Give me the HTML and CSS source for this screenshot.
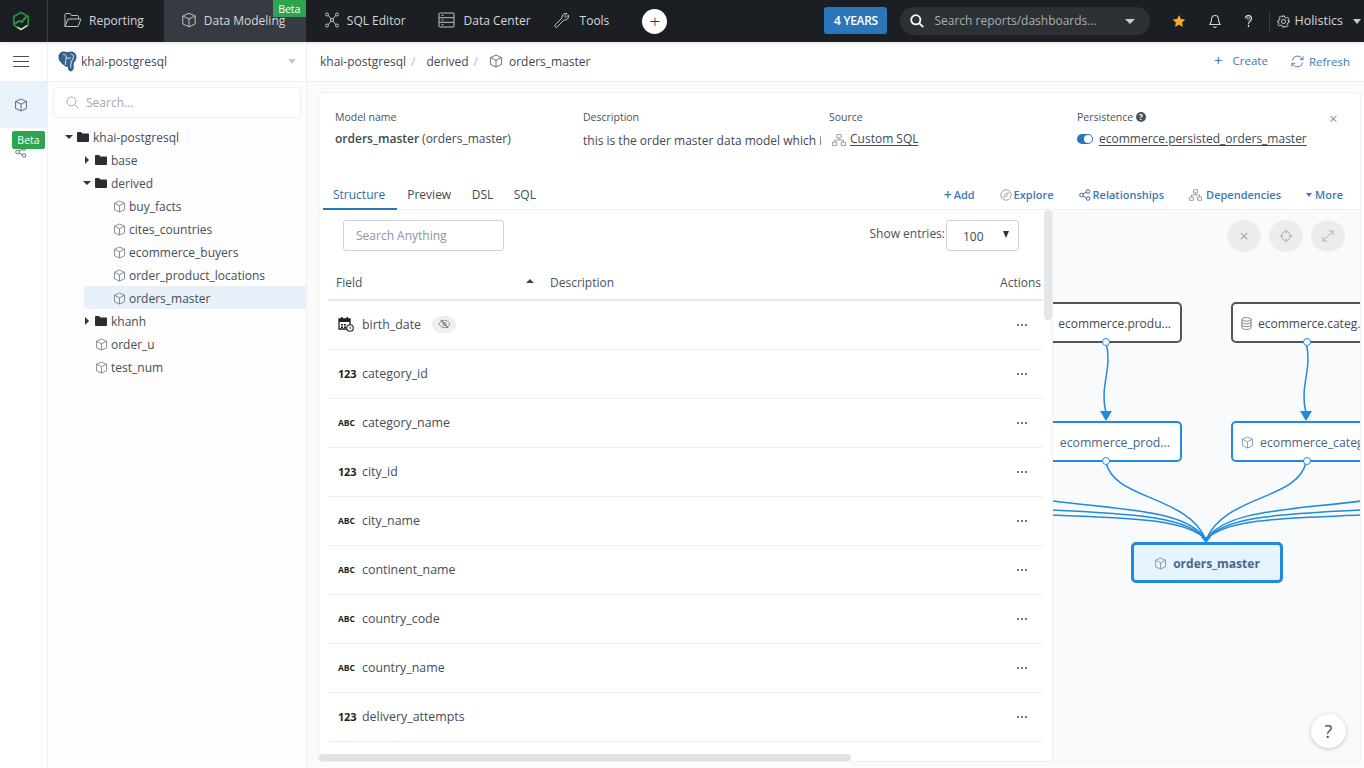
FILE: index.html
```html
<!DOCTYPE html>
<html lang="en">
<head>
<meta charset="utf-8">
<title>Data Modeling</title>
<link rel="stylesheet" href="styles.css">
</head>
<body>
<svg class="defs" width="0" height="0" aria-hidden="true">
  <symbol id="cube" viewBox="0 0 16 16"><path d="M8 1.200 14.200 4v8L8 14.800 1.800 12V4ZM1.800 4 8 7l6.200-3M8 7v7.800" fill="none" stroke="currentColor" stroke-width="1" stroke-linejoin="round"/></symbol>
  <symbol id="folder" viewBox="0 0 12 10"><path d="M0 1a1 1 0 0 1 1-1h3l1.500 1.500H11a1 1 0 0 1 1 1V9a1 1 0 0 1-1 1H1a1 1 0 0 1-1-1Z" fill="currentColor"/></symbol>
  <symbol id="tree" viewBox="0 0 16 14"><path d="M5.500.5h5v4h-5zM.5 9.500h5v4h-5zM10.500 9.500h5v4h-5zM8 4.500V7M3 9.500V7h10v2.500" fill="none" stroke="currentColor"/></symbol>
</svg>

<header class="topbar">
  <div class="logo-cell">
    <svg class="logo" viewBox="0 0 20 22"><path d="M10 1.500 18 6v9.500l-8 5-8-5V6Z" fill="none" stroke="#2c8c3c" stroke-width="2"/><path d="M3 14l5-3 3 1 5-6" fill="none" stroke="#2ea043" stroke-width="2"/><path d="M6 18l4 2.500 7-4.500" fill="none" stroke="#e8e8e8" stroke-width="1.500"/></svg>
  </div>
  <nav class="nav">
    <a class="nav-item nav-reporting"><svg class="nav-ic" viewBox="0 0 18 16"><path d="M1 14.500V2.500a1 1 0 0 1 1-1h4l1.500 2h6a1 1 0 0 1 1 1V7M1 14.500 4 7h13l-3 7.500Z" fill="none" stroke="currentColor" stroke-linejoin="round"/></svg>Reporting</a>
    <a class="nav-item nav-modeling"><svg class="nav-ic"><use href="#cube"/></svg>Data Modeling<span class="beta beta-nav">Beta</span></a>
    <a class="nav-item nav-sql"><svg class="nav-ic" viewBox="0 0 16 16"><path d="M3 2l10 12M13 2 3 14M8 6v4" fill="none" stroke="currentColor"/><circle cx="3" cy="2.500" r="1.500" fill="#1b1f24" stroke="currentColor"/><circle cx="13" cy="2.500" r="1.500" fill="#1b1f24" stroke="currentColor"/><circle cx="3" cy="13.500" r="1.500" fill="#1b1f24" stroke="currentColor"/><circle cx="13" cy="13.500" r="1.500" fill="#1b1f24" stroke="currentColor"/><circle cx="8" cy="8" r="1.500" fill="#1b1f24" stroke="currentColor"/></svg>SQL Editor</a>
    <a class="nav-item nav-center"><svg class="nav-ic" viewBox="0 0 17 16"><path d="M2 1h13a1 1 0 0 1 1 1v12a1 1 0 0 1-1 1H2a1 1 0 0 1-1-1V2a1 1 0 0 1 1-1ZM1 5.700h15M1 10.300h15M3.500 3.400h2M3.500 8h2M3.500 12.700h2" fill="none" stroke="currentColor"/></svg>Data Center</a>
    <a class="nav-item nav-tools"><svg class="nav-ic" viewBox="0 0 16 16"><path d="M1.200 12.800 8 6a4 4 0 0 1 5-4.500L10.500 4l1.500 1.500L14.500 3A4 4 0 0 1 10 8l-6.800 6.800a1.300 1.300 0 0 1-2-2Z" fill="none" stroke="currentColor" stroke-linejoin="round"/></svg>Tools</a>
    <button class="plus">+</button>
  </nav>
  <div class="top-right">
    <button class="years">4 YEARS</button>
    <div class="global-search">
      <svg class="gs-ic" viewBox="0 0 14 14"><circle cx="5.800" cy="5.800" r="4.600" fill="none" stroke="#fff" stroke-width="1.800"/><path d="m9.200 9.200 4 4" stroke="#fff" stroke-width="1.800"/></svg>
      <span class="gs-text">Search reports/dashboards...</span>
      <span class="caret caret-light"></span>
    </div>
    <svg class="star" viewBox="0 0 16 16"><path d="m8 1 2.200 4.600 5 .7-3.600 3.500.9 5L8 12.400l-4.500 2.400.9-5L.8 6.300l5-.7Z" fill="#f9a825"/></svg>
    <svg class="bell" viewBox="0 0 14 16"><path d="M7 1.500a4 4 0 0 1 4 4c0 4 1.500 5.500 2 6.500H1c.5-1 2-2.500 2-6.500a4 4 0 0 1 4-4ZM5.500 14a1.500 1.500 0 0 0 3 0" fill="none" stroke="#d5d7da" stroke-width="1.200"/></svg>
    <svg class="qmark" viewBox="0 0 10 16"><path d="M1.500 5a3.500 3.500 0 1 1 5.500 3c-1.300.8-2 1.300-2 3M5 12.300v2.500" fill="none" stroke="#d5d7da" stroke-width="1.500"/><circle cx="5" cy="5" r="1.300" fill="none" stroke="#d5d7da"/></svg>
    <span class="divider"></span>
    <svg class="gear" viewBox="0 0 14 14"><circle cx="7" cy="7" r="2.200" fill="none" stroke="#d5d7da"/><path d="M6 1h2l.4 1.700 1.500.7 1.500-.9 1.400 1.400-.9 1.500.6 1.500L13 6v2l-1.500.5-.6 1.500.9 1.500-1.400 1.400-1.500-.9-1.500.6L8 13H6l-.4-1.500-1.500-.6-1.500.9-1.400-1.400.9-1.500-.6-1.500L1 8V6l1.500-.4.6-1.500-.9-1.500 1.400-1.400 1.500.9 1.500-.7Z" fill="none" stroke="#d5d7da"/></svg>
    <span class="user">Holistics</span>
    <span class="caret caret-light"></span>
  </div>
</header>

<div class="shell">
  <aside class="rail">
    <div class="rail-top"><span class="burger"></span></div>
    <div class="rail-cube"><svg class="ic16"><use href="#cube"/></svg></div>
    <div class="rail-rel">
      <span class="beta beta-rail">Beta</span>
      <svg class="rel-ic" viewBox="0 0 12 12"><circle cx="2.500" cy="6" r="1.800" fill="none" stroke="currentColor"/><circle cx="9" cy="2.500" r="1.800" fill="none" stroke="currentColor"/><circle cx="9" cy="9.500" r="1.800" fill="none" stroke="currentColor"/><path d="m4 5 3.500-2M4 7l3.500 2" stroke="currentColor"/></svg>
    </div>
  </aside>

  <aside class="browser">
    <div class="ds-head">
      <svg class="pg" viewBox="0 0 20 22"><path d="M1 6C1 2 4 .5 7 1c1.200.2 2 .7 3 .7s2-.6 3.400-.7C16.500.8 19 2.500 19 6c0 3-1.500 5-3 6.500V18c0 2.500-2.500 3.500-4 2.500-.9-.6-1-2.500-1-4.500-2 .4-3.500 0-4.500-1.500C4 13.500 1 10 1 6Z" fill="#336791" stroke="#1d3f5e" stroke-width=".8"/><path d="M5.500 3.500C8 3 9 6 8.500 8.500S7.500 12 8 14.500M13.500 3C16 3.500 17 6 15.500 8.500 14 11 13 13 13.500 17.500M9 7c1.500.8 3 .8 4.500 0" fill="none" stroke="#fff" stroke-width=".9"/></svg>
      <span class="ds-name">khai-postgresql</span>
      <span class="caret caret-grey"></span>
    </div>
    <div class="tree-search">
      <svg class="ts-ic" viewBox="0 0 14 14"><circle cx="5.800" cy="5.800" r="4.800" fill="none" stroke="#9aa3ad"/><path d="m9.300 9.300 4 4" stroke="#9aa3ad"/></svg>
      <span class="ts-text">Search...</span>
    </div>
    <ul class="tree">
      <li class="t-row d0"><span class="arrow down"></span><svg class="folder"><use href="#folder"/></svg>khai-postgresql</li>
      <li class="t-row d1"><span class="arrow right"></span><svg class="folder"><use href="#folder"/></svg>base</li>
      <li class="t-row d1"><span class="arrow down"></span><svg class="folder"><use href="#folder"/></svg>derived</li>
      <li class="t-row d2"><svg class="t-cube"><use href="#cube"/></svg>buy_facts</li>
      <li class="t-row d2"><svg class="t-cube"><use href="#cube"/></svg>cites_countries</li>
      <li class="t-row d2"><svg class="t-cube"><use href="#cube"/></svg>ecommerce_buyers</li>
      <li class="t-row d2"><svg class="t-cube"><use href="#cube"/></svg>order_product_locations</li>
      <li class="t-row d2 selected"><svg class="t-cube"><use href="#cube"/></svg>orders_master</li>
      <li class="t-row d1"><span class="arrow right"></span><svg class="folder"><use href="#folder"/></svg>khanh</li>
      <li class="t-row d3"><svg class="t-cube"><use href="#cube"/></svg>order_u</li>
      <li class="t-row d3"><svg class="t-cube"><use href="#cube"/></svg>test_num</li>
    </ul>
  </aside>

  <main class="main">
    <div class="crumbs">
      <span>khai-postgresql</span><span class="sep">/</span>
      <span>derived</span><span class="sep">/</span>
      <svg class="crumb-cube"><use href="#cube"/></svg>
      <span>orders_master</span>
      <div class="crumb-actions">
        <a class="link link-create"><span class="plus-sign">+</span>Create</a>
        <a class="link"><svg class="refresh" viewBox="0 0 14 14"><path d="M1.500 6A5.500 5.500 0 0 1 11.500 3.500L13 5M12.500 8A5.500 5.500 0 0 1 2.500 10.500L1 9M13 1.500V5H9.500M1 12.500V9h3.500" fill="none" stroke="currentColor"/></svg>Refresh</a>
      </div>
    </div>

    <section class="card">
      <div class="info">
        <div class="info-col"><div class="lbl">Model name</div><div class="val"><b>orders_master</b> (orders_master)</div></div>
        <div class="info-col"><div class="lbl">Description</div><div class="val desc">this is the order master data model which i</div></div>
        <div class="info-col"><div class="lbl">Source</div><div class="val"><svg class="src-ic"><use href="#tree"/></svg><u>Custom SQL</u></div></div>
        <div class="info-col"><div class="lbl">Persistence <span class="help-dot">?</span></div><div class="val"><span class="toggle"></span><u>ecommerce.persisted_orders_master</u></div><span class="close">×</span></div>
      </div>

      <div class="tabs">
        <span class="tab active">Structure</span>
        <span class="tab">Preview</span>
        <span class="tab">DSL</span>
        <span class="tab">SQL</span>
        <div class="tab-actions">
          <a class="act"><b class="act-plus">+</b>Add</a>
          <a class="act"><svg class="act-ic" viewBox="0 0 12 12"><circle cx="6" cy="6" r="5.200" fill="none" stroke="#9aa3ad"/><path d="M8.500 3.500 7 7 3.500 8.500 5 5Z" fill="none" stroke="#9aa3ad" stroke-width=".8"/></svg>Explore</a>
          <a class="act"><svg class="act-ic" viewBox="0 0 12 12"><circle cx="2.500" cy="6" r="1.800" fill="none" stroke="#4a6a8a"/><circle cx="9" cy="2.500" r="1.800" fill="none" stroke="#4a6a8a"/><circle cx="9" cy="9.500" r="1.800" fill="none" stroke="#4a6a8a"/><path d="m4 5 3.500-2M4 7l3.500 2" stroke="#4a6a8a"/></svg>Relationships</a>
          <a class="act"><svg class="act-ic act-tree"><use href="#tree"/></svg>Dependencies</a>
          <a class="act"><span class="more-caret"></span>More</a>
        </div>
      </div>

      <div class="split">
        <div class="fields">
          <div class="tools">
            <div class="search-any">Search Anything</div>
            <div class="entries"><span>Show entries:</span><div class="select"><span>100</span><span class="sel-caret"></span></div></div>
          </div>
          <div class="thead">
            <div class="th-field">Field<span class="sort"></span></div>
            <div class="th-desc">Description</div>
            <div class="th-act">Actions</div>
          </div>
          <div class="row"><svg class="cal" viewBox="0 0 16 16"><path d="M1 3h11v10H1z" fill="none" stroke="#222" stroke-width="1.300"/><path d="M1 3h11v3H1zM3 1h1.500v3H3zM8.500 1H10v3H8.500zM3 8h2v1.500H3zM6 8h2v1.500H6zM3 10.500h2V12H3zM6 10.500h2V12H6z" fill="#222"/><circle cx="12" cy="12" r="3.300" fill="#fff" stroke="#222" stroke-width="1.100"/><path d="M12 10.300V12l1.200.8" fill="none" stroke="#222" stroke-width=".8"/></svg><span class="fname">birth_date</span><span class="hidden-chip"><svg viewBox="0 0 14 10"><path d="M1 5c3-5.300 9-5.300 12 0-3 5.300-9 5.300-12 0Z" fill="none" stroke="#888"/><circle cx="7" cy="5" r="1.800" fill="none" stroke="#888"/><path d="m3 .5 8 9" stroke="#777" stroke-width="1.200"/></svg></span><span class="dots"></span></div>
          <div class="row"><span class="ty num">123</span><span class="fname">category_id</span><span class="dots"></span></div>
          <div class="row"><span class="ty abc">ABC</span><span class="fname">category_name</span><span class="dots"></span></div>
          <div class="row"><span class="ty num">123</span><span class="fname">city_id</span><span class="dots"></span></div>
          <div class="row"><span class="ty abc">ABC</span><span class="fname">city_name</span><span class="dots"></span></div>
          <div class="row"><span class="ty abc">ABC</span><span class="fname">continent_name</span><span class="dots"></span></div>
          <div class="row"><span class="ty abc">ABC</span><span class="fname">country_code</span><span class="dots"></span></div>
          <div class="row"><span class="ty abc">ABC</span><span class="fname">country_name</span><span class="dots"></span></div>
          <div class="row"><span class="ty num">123</span><span class="fname">delivery_attempts</span><span class="dots"></span></div>
          <div class="row"></div>
          <span class="vscroll"></span>
        </div>

        <div class="canvas">
          <div class="canvas-btns">
            <span class="cbtn">×</span>
            <span class="cbtn"><svg viewBox="0 0 14 14"><circle cx="7" cy="7" r="4.500" fill="none" stroke="#aab0b6"/><path d="M7 .5v4M7 9.500v4M.5 7h4M9.500 7h4" stroke="#aab0b6"/></svg></span>
            <span class="cbtn"><svg viewBox="0 0 14 14"><path d="M2 12 12 2M8 2h4v4M2 8v4h4" fill="none" stroke="#aab0b6"/></svg></span>
          </div>
          <svg class="edges" viewBox="0 0 308 552">
            <g fill="none" stroke="#2089e0" stroke-width="1.500">
              <path d="M53 132C60 160 46 175 53 203"/>
              <path d="M253 132C260 160 246 175 253 203"/>
              <path d="M53 252C60 290 135 285 153 330"/>
              <path d="M253 252C246 290 171 285 153 330"/>
              <path d="M0 291C70 300 135 300 153 330"/>
              <path d="M0 300C70 304 135 305 153 330"/>
              <path d="M0 305C70 308 135 308 153 330"/>
              <path d="M308 291C238 300 171 300 153 330"/>
              <path d="M308 300C238 304 171 305 153 330"/>
              <path d="M308 305C238 308 171 308 153 330"/>
            </g>
            <path d="M47 201H59L53 211ZM247 201H259L253 211ZM148 327H158L153 333Z" fill="#2089e0"/>
          </svg>
          <div class="node node-src n1"><span class="node-text">ecommerce.produ...</span><i class="port"></i></div>
          <div class="node node-src n2"><svg class="db" viewBox="0 0 12 14"><ellipse cx="6" cy="2.500" rx="5" ry="2" fill="none" stroke="#777"/><path d="M1 2.500v9c0 1.100 2.200 2 5 2s5-.9 5-2v-9M1 5.500c0 1.100 2.200 2 5 2s5-.9 5-2M1 8.500c0 1.100 2.200 2 5 2s5-.9 5-2" fill="none" stroke="#777"/></svg><span class="node-text">ecommerce.categ...</span><i class="port"></i></div>
          <div class="node node-model n3"><svg class="node-cube"><use href="#cube"/></svg><span class="node-text">ecommerce_prod...</span><i class="port"></i></div>
          <div class="node node-model n4"><svg class="node-cube"><use href="#cube"/></svg><span class="node-text">ecommerce_categ...</span><i class="port"></i></div>
          <div class="node node-main"><svg class="node-cube"><use href="#cube"/></svg><span class="node-text">orders_master</span></div>
          <button class="help">?</button>
        </div>
      </div>
      <span class="hscroll"></span>
    </section>
  </main>
</div>
</body>
</html>
```

FILE: styles.css
```css
* { box-sizing: border-box; }
html, body { margin: 0; height: 100%; overflow: hidden; }
body { font-family: "Open Sans", "Liberation Sans", sans-serif; font-size: 12px; color: #3f4853; background: #fff; width: 1364px; height: 768px; }
.defs { position: absolute; }
button { font-family: inherit; border: 0; padding: 0; }
u { text-underline-offset: 2px; }
ul { list-style: none; margin: 0; padding: 0; }

/* top bar */
.topbar { height: 42px; background: #1b1f24; color: #d5d7da; display: flex; align-items: stretch; box-shadow: 0 1px 3px rgba(0,0,0,.12); position: relative; z-index: 2; }
.logo-cell { width: 48px; display: flex; align-items: center; justify-content: center; border-right: 1px solid #3a3e44; padding-right: 5px; }
.logo { width: 18px; height: 20px; }
.nav { display: flex; align-items: stretch; }
.nav-item { display: flex; align-items: center; font-size: 12px; position: relative; white-space: nowrap; padding-bottom: 2px; }
.nav-ic { width: 16px; height: 16px; color: #bfc2c6; flex: none; }
.nav-reporting { padding-left: 16px; padding-right: 20px; }
.nav-reporting .nav-ic { width: 18px; margin-right: 7px; }
.nav-modeling { background: #363b41; padding-left: 17px; width: 142px; }
.nav-modeling .nav-ic { margin-right: 7px; }
.nav-sql { padding-left: 18px; padding-right: 32px; }
.nav-sql .nav-ic { margin-right: 7px; }
.nav-center { padding-right: 23px; }
.nav-center .nav-ic { width: 17px; margin-right: 9px; }
.nav-tools { padding-right: 33px; }
.nav-tools .nav-ic { margin-right: 10px; }
.plus { width: 25px; height: 25px; border-radius: 50%; background: #fff; color: #333; font-size: 19px; line-height: 23px; align-self: center; font-weight: 300; }
.beta { background: #2ea44f; color: #fff; font-size: 10.500px; display: flex; align-items: center; justify-content: center; position: absolute; }
.beta-nav { width: 33px; height: 17px; top: 0; right: 0; }
.beta-rail { width: 33px; height: 18px; top: 3px; left: 12px; border-radius: 2px; z-index: 1; }
.top-right { margin-left: auto; display: flex; align-items: center; padding-right: 3px; }
.years { width: 63px; height: 27px; background: #2b76b8; color: #fff; font-size: 12px; font-weight: 600; border-radius: 3px; margin: 0 13px 1px 0; letter-spacing: -.3px; padding-bottom: 1px; }
.global-search { width: 250px; height: 28px; border-radius: 14px; background: #2d3136; display: flex; align-items: center; padding: 0 15px 0 10px; margin-right: 22px; }
.gs-ic { width: 14px; height: 14px; margin-right: 10px; }
.gs-text { flex: 1; font-size: 12px; color: #a9adb2; padding-bottom: 2px; }
.caret { width: 0; height: 0; border-left: 5px solid transparent; border-right: 5px solid transparent; border-top: 5px solid #c9ccd0; }
.star { width: 14px; height: 14px; margin-right: 23px; }
.bell { width: 12px; height: 14px; margin-right: 23px; }
.qmark { width: 9px; height: 14px; margin-right: 16px; }
.divider { width: 1px; height: 21px; background: #3a3e44; margin-right: 7px; }
.gear { width: 13px; height: 13px; margin-right: 4px; }
.user { font-size: 12.500px; margin-right: 10px; padding-bottom: 2px; }
.top-right > .caret { border-left-width: 4px; border-right-width: 4px; }

/* shell */
.shell { display: flex; height: 726px; }
.rail { width: 48px; flex: none; border-right: 1px solid #edeff1; }
.rail-top { height: 40px; display: flex; align-items: center; justify-content: center; border-bottom: 1px solid #edeff1; padding-right: 5px; }
.burger { width: 16px; height: 11px; border-top: 1px solid #4a4f55; border-bottom: 1px solid #4a4f55; position: relative; }
.burger::after { content: ""; position: absolute; left: 0; right: 0; top: 4px; height: 1px; background: #4a4f55; }
.rail-cube { height: 46px; background: #e9f2fb; display: flex; align-items: center; justify-content: center; color: #4d5a68; padding-right: 5px; }
.ic16 { width: 14px; height: 14px; }
.rail-rel { position: relative; height: 40px; color: #6b7280; }
.rel-ic { width: 12px; height: 12px; position: absolute; left: 15px; top: 18px; }

/* tree */
.browser { width: 259px; flex: none; border-right: 1px solid #edeff1; background: #fdfdfd; }
.ds-head { height: 40px; background: #fff; border-bottom: 1px solid #edeff1; display: flex; align-items: center; padding: 0 10px 1px 10px; font-size: 12px; }
.pg { width: 19px; height: 21px; margin-right: 4px; }
.ds-name { flex: 1; color: #3f4853; }
.caret-grey { border-left-width: 4.500px; border-right-width: 4.500px; border-top-width: 5px; border-top-color: #c5c8cc; }
.tree-search { height: 31px; margin: 5px 5px 7px 5px; border: 1px solid #eceef0; border-radius: 4px; background: #fff; display: flex; align-items: center; padding-left: 12px; }
.ts-ic { width: 13px; height: 13px; margin-right: 7px; }
.ts-text { color: #a3a9b0; font-size: 12px; }
.tree { font-size: 12px; color: #454d57; }
.t-row { height: 23px; display: flex; align-items: center; padding-top: 1px; }
.d0 { padding-left: 18px; }
.d1 { padding-left: 36px; }
.d2 { padding-left: 65px; }
.d3 { padding-left: 47px; }
.selected { background: #e8f1f9; margin-left: 36px; padding-left: 29px; }
.arrow { width: 0; height: 0; margin-right: 5px; }
.arrow.down { border-left: 4px solid transparent; border-right: 4px solid transparent; border-top: 4px solid #333; margin-right: 4px; margin-left: -1px; }
.arrow.right { border-top: 4px solid transparent; border-bottom: 4px solid transparent; border-left: 4px solid #333; margin-right: 6px; margin-left: 1px; }
.folder { width: 12px; height: 10px; color: #2a2d31; margin-right: 4px; }
.t-cube { width: 13px; height: 13px; color: #6d7681; margin-right: 3px; }

/* main */
.main { flex: 1; background: #fbfbfb; display: flex; flex-direction: column; min-width: 0; }
.crumbs { height: 40px; background: #fff; border-bottom: 1px solid #edeff1; display: flex; align-items: center; padding: 0 14px 1px 13px; font-size: 12px; color: #3f4853; flex: none; }
.sep { color: #b8bcc1; margin: 0 11px 0 5px; }
.crumb-cube { width: 14px; height: 14px; color: #5a636e; margin: 0 6px 0 0; }
.crumb-actions { margin-left: auto; display: flex; gap: 23px; }
.link { color: #3d78b4; font-size: 11.500px; display: flex; align-items: center; }
.link-create { padding-bottom: 2px; }
.plus-sign { font-size: 15px; margin-right: 10px; line-height: 14px; }
.refresh { width: 13px; height: 13px; margin-right: 5px; }

.card { margin: 10px 3px 6px 11px; height: 670px; background: #fff; border: 1px solid #eef0f2; border-radius: 3px; position: relative; overflow: hidden; display: flex; flex-direction: column; }
.info { display: grid; grid-template-columns: 248px 246px 248px 1fr; padding: 17px 0 0 16px; height: 83px; flex: none; }
.info-col { position: relative; min-width: 0; }
.lbl { font-size: 10.500px; color: #4a525c; line-height: 14px; margin-bottom: 6px; }
.val { font-size: 12px; line-height: 18px; white-space: nowrap; overflow: hidden; display: flex; align-items: center; color: #3f4853; width: 238px; }
.val b { font-weight: 600; margin-right: 3px; }
.desc { margin-top: 8px; }
.info-col:last-child .val { overflow: visible; }
.src-ic { width: 14px; height: 12px; color: #8a8f96; margin: 2px 4px 0 3px; }
.toggle { width: 16px; height: 10px; border-radius: 5px; background: #2b76b8; margin-right: 6px; position: relative; flex: none; }
.toggle::after { content: ""; position: absolute; right: 1px; top: 1px; width: 8px; height: 8px; border-radius: 50%; background: #fff; }
.help-dot { display: inline-block; width: 10px; height: 10px; border-radius: 50%; background: #4a525c; color: #fff; font-size: 8px; line-height: 10px; text-align: center; font-weight: 700; vertical-align: 1px; }
.close { position: absolute; top: -2px; left: 252px; font-size: 15px; color: #8d949b; line-height: 20px; }

.tabs { height: 34px; flex: none; display: flex; align-items: center; border-bottom: 1px solid #edeff1; padding: 6px 17px 0 4px; font-size: 12px; color: #434b55; }
.tab { padding: 0 10.250px; height: 28px; line-height: 26px; margin-bottom: -1px; }
.tab.active { color: #2b6da8; border-bottom: 2px solid #2b76b8; width: 74px; padding: 0 10px; }
.tab-actions { margin-left: auto; display: flex; align-items: center; gap: 25px; font-size: 11px; color: #3d78b4; font-weight: 600; padding-bottom: 2px; }
.tab-actions .act { display: flex; align-items: center; }
.act-plus { font-size: 14px; line-height: 12px; margin-right: 2px; font-weight: 600; }
.act-ic { width: 12px; height: 12px; margin-right: 2px; }
.act-tree { width: 13px; color: #8a8f96; margin-right: 4px; }
.more-caret { width: 0; height: 0; border-left: 3.500px solid transparent; border-right: 3.500px solid transparent; border-top: 4px solid #3d78b4; margin-right: 3px; }

.split { flex: 1; display: flex; min-height: 0; }
.fields { width: 734px; flex: none; position: relative; overflow: hidden; padding-left: 9px; padding-right: 9px; border-right: 1px solid #eef0f2; }
.tools { height: 41px; padding: 10px 0 0 15px; display: flex; justify-content: space-between; }
.search-any { width: 161px; height: 31px; border: 1px solid #cfd3d7; border-radius: 3px; color: #8e959d; font-size: 12px; line-height: 30px; padding-left: 12px; }
.entries { display: flex; font-size: 12px; margin-right: 24px; }
.entries > span { line-height: 27px; color: #4a525c; }
.select { width: 73px; height: 31px; margin-left: 1px; border: 1px solid #cfd3d7; border-radius: 3px; display: flex; justify-content: space-between; align-items: center; padding: 1px 9px 0 16px; }
.sel-caret { width: 0; height: 0; border-left: 3.500px solid transparent; border-right: 3.500px solid transparent; border-top: 7px solid #333; margin-top: -3px; }
.thead { height: 50px; border-bottom: 2px solid #e6e7e9; position: relative; font-size: 12px; color: #4a525c; }
.thead > div { position: absolute; top: 24px; line-height: 16px; }
.th-field { left: 8px; width: 200px; }
.sort { position: absolute; left: 190px; top: 4px; width: 0; height: 0; border-left: 4px solid transparent; border-right: 4px solid transparent; border-bottom: 4px solid #444; }
.th-desc { left: 222px; }
.th-act { right: 2px; }
.row { height: 49px; border-bottom: 1px solid #eeeff2; display: flex; align-items: center; padding: 0 0 2px 10px; position: relative; }
.ty { width: 24px; color: #1c1f22; font-weight: 700; flex: none; }
.num { font-size: 11px; letter-spacing: -.2px; }
.abc { font-size: 8.500px; }
.cal { width: 16px; height: 16px; margin-right: 8px; flex: none; }
.fname { font-size: 12.400px; color: #454d57; font-weight: 500; }
.hidden-chip { width: 24px; height: 17px; background: #efefef; border-radius: 9px; margin-left: 11px; display: flex; align-items: center; justify-content: center; }
.hidden-chip svg { width: 13px; height: 10px; }
.dots { position: absolute; right: 16px; top: 23px; width: 10px; height: 2px; background: linear-gradient(90deg, #777 0 2px, transparent 2px 4px, #777 4px 6px, transparent 6px 8px, #777 8px 10px); }
.vscroll { position: absolute; right: 0; top: 0; width: 8px; height: 110px; border-radius: 4px; background: #e5e6e8; }
.hscroll { position: absolute; left: 0; bottom: 0; width: 532px; height: 7px; border-radius: 4px; background: #e0e1e3; z-index: 1; }

.canvas { flex: 1; position: relative; overflow: hidden; background: #f9fafb; }
.canvas-btns { position: absolute; right: 15px; top: 10px; display: flex; gap: 8px; }
.cbtn { width: 34px; height: 32px; border-radius: 50%; background: #ececec; display: flex; align-items: center; justify-content: center; color: #a4a9ae; font-size: 16px; }
.cbtn svg { width: 14px; height: 14px; }
.edges { position: absolute; left: 0; top: 0; width: 308px; height: 552px; }
.node { position: absolute; height: 41px; background: #fff; border-radius: 5px; display: flex; align-items: center; white-space: nowrap; font-size: 12px; padding-top: 1px; }
.node-src { border: 2px solid #555; color: #3f4853; }
.node-model { border: 2px solid #2089e0; color: #4b6485; font-size: 12.300px; }
.port { position: absolute; bottom: -5px; width: 8px; height: 8px; border-radius: 50%; background: #fff; border: 1.500px solid #2089e0; }
.n1 { left: -30px; width: 159px; top: 92px; justify-content: flex-end; padding-right: 9px; }
.n1 .port, .n3 .port { left: 77px; }
.n2 { left: 178px; width: 200px; top: 92px; padding-left: 8px; }
.n2 .port, .n4 .port { left: 70px; }
.n3 { left: -30px; width: 159px; top: 211px; justify-content: flex-end; padding-right: 10px; }
.n4 { left: 178px; width: 200px; top: 211px; padding-left: 8px; }
.db { width: 11px; height: 13px; margin-right: 6px; flex: none; }
.node-cube { width: 13px; height: 13px; color: #6c8cad; margin-right: 6px; flex: none; }
.node-main { left: 78px; top: 332px; width: 152px; height: 41px; background: #e6f3fd; border: 3px solid #2089e0; border-radius: 5px; justify-content: center; font-weight: 700; font-size: 12px; color: #45688e; }
.help { position: absolute; left: 258px; top: 504px; width: 35px; height: 34px; border-radius: 50%; background: #fff; box-shadow: 0 1px 4px rgba(0,0,0,.22); color: #4a525c; font-size: 18px; }
```
